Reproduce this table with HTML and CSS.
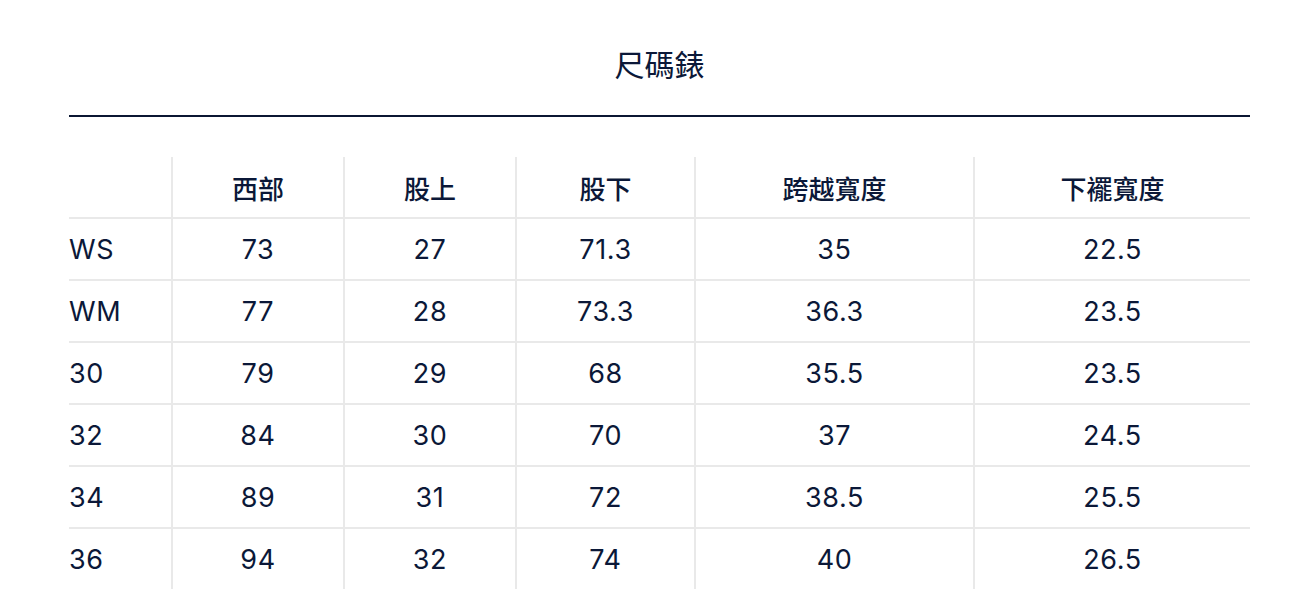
FILE: index.html
```html
<!DOCTYPE html>
<html lang="zh-Hant">
<head>
<meta charset="utf-8">
<title>尺碼錶</title>
<link rel="stylesheet" href="styles.css">
</head>
<body>
<div class="wrap">
  <h1 class="title">尺碼錶</h1>
  <div class="rule"></div>
  <div class="grid">
    <div class="cell head first"></div>
    <div class="cell head">西部</div>
    <div class="cell head">股上</div>
    <div class="cell head">股下</div>
    <div class="cell head">跨越寬度</div>
    <div class="cell head last">下襬寬度</div>

    <div class="cell first">WS</div><div class="cell">73</div><div class="cell">27</div><div class="cell">71.3</div><div class="cell">35</div><div class="cell last">22.5</div>
    <div class="cell first">WM</div><div class="cell">77</div><div class="cell">28</div><div class="cell">73.3</div><div class="cell">36.3</div><div class="cell last">23.5</div>
    <div class="cell first">30</div><div class="cell">79</div><div class="cell">29</div><div class="cell">68</div><div class="cell">35.5</div><div class="cell last">23.5</div>
    <div class="cell first">32</div><div class="cell">84</div><div class="cell">30</div><div class="cell">70</div><div class="cell">37</div><div class="cell last">24.5</div>
    <div class="cell first">34</div><div class="cell">89</div><div class="cell">31</div><div class="cell">72</div><div class="cell">38.5</div><div class="cell last">25.5</div>
    <div class="cell first bottom">36</div><div class="cell bottom">94</div><div class="cell bottom">32</div><div class="cell bottom">74</div><div class="cell bottom">40</div><div class="cell last bottom">26.5</div>
  </div>
</div>
</body>
</html>
```

FILE: styles.css
```css
html, body {
  margin: 0;
  padding: 0;
  background: #ffffff;
}
body {
  font-family: Inter, "Noto Sans CJK TC", sans-serif;
  color: #0b1838;
}
.wrap {
  width: 1181px;
  margin-left: 69px;
  padding-top: 47px;
}
.title {
  margin: 0;
  font-size: 30px;
  line-height: 36px;
  font-weight: 400;
  text-align: center;
}
.rule {
  margin-top: 32px;
  height: 2px;
  background: #0b1733;
}
.grid {
  margin-top: 40px;
  display: grid;
  grid-template-columns: 104px 172px 172px 179px 279px 275px;
}
.cell {
  box-sizing: border-box;
  height: 62px;
  display: flex;
  align-items: center;
  justify-content: center;
  font-size: 27px;
  letter-spacing: 0.6px;
  border-right: 2px solid #e9e9e9;
  border-bottom: 2px solid #e9e9e9;
}
.cell.head {
  font-size: 26px;
  letter-spacing: 0;
  font-weight: 500;
}
.cell.first {
  justify-content: flex-start;
}
.cell.last {
  border-right: none;
}
.cell.bottom {
  border-bottom: none;
  height: 60px;
}
```
